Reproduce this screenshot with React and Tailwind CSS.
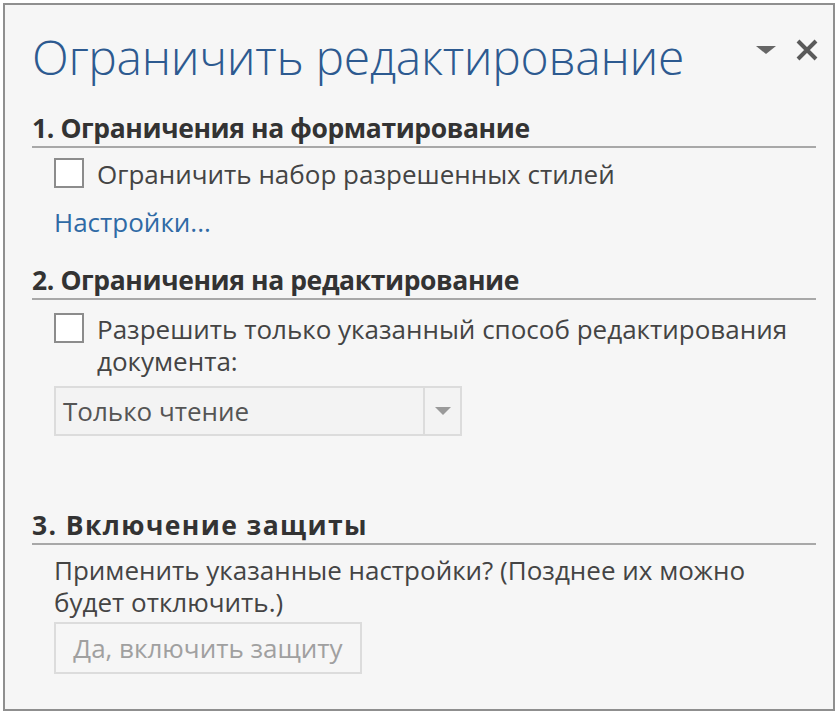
import React from 'react'

const font = { fontFamily: '"Open Sans", "Noto Sans", sans-serif' }

function Checkbox() {
  return <span className="h-[30px] w-[30px] shrink-0 border-2 border-[#8c8c8c] bg-white" />
}

function SectionHeading({ children, className = '' }) {
  return (
    <div
      className={`mr-[17px] border-b-2 border-[#a8a8a8] pb-[2px] text-[26.5px] font-bold leading-[32px] tracking-[-0.4px] text-[#333] ${className}`}
    >
      {children}
    </div>
  )
}

export default function App() {
  return (
    <div className="h-[714px] w-[838px] bg-white p-[3px]" style={font}>
      <div className="flex h-full flex-col border-2 border-[#8f8f8f] bg-[#f6f6f6] pl-[27px]">
        <div className="flex items-start justify-between pr-[14px] pt-[22px]">
          <h1 className="text-[48px] font-light leading-[60px] tracking-[-0.3px] text-[#2d5a90]">
            Ограничить редактирование
          </h1>
          <div className="mt-[11px] flex items-center gap-[18px]">
            <svg width="22" height="10" viewBox="0 0 22 10">
              <path d="M1 1 L21 1 L11 9 Z" fill="#666" />
            </svg>
            <svg width="24" height="24" viewBox="0 0 24 24">
              <path d="M3 3 L21 21 M21 3 L3 21" stroke="#5a5a5a" strokeWidth="4" />
            </svg>
          </div>
        </div>

        <div className="mt-[25px]">
          <SectionHeading>1. Ограничения на форматирование</SectionHeading>
        </div>
        <div className="mt-[10px] flex gap-[13px] pl-[22px]">
          <Checkbox />
          <span className="text-[26px] leading-[32px] text-[#444]">
            Ограничить набор разрешенных стилей
          </span>
        </div>
        <div className="mt-[16px] pl-[22px] text-[26px] leading-[32px] text-[#2f6aa5]">
          Настройки...
        </div>

        <div className="mt-[26px]">
          <SectionHeading>2. Ограничения на редактирование</SectionHeading>
        </div>
        <div className="mt-[13px] flex gap-[13px] pl-[22px] pr-[30px]">
          <Checkbox />
          <span className="text-[26px] leading-[32px] text-[#444]">
            Разрешить только указанный способ редактирования документа:
          </span>
        </div>
        <div className="ml-[22px] mt-[9px] flex h-[50px] w-[408px] border-2 border-[#dcdcdc] bg-[#f3f3f3]">
          <span className="flex-1 pl-[7px] text-[26px] leading-[46px] text-[#555]">Только чтение</span>
          <span className="flex w-[37px] items-center justify-center border-l-2 border-[#dcdcdc]">
            <svg width="16" height="8" viewBox="0 0 16 8">
              <path d="M0 0 L16 0 L8 8 Z" fill="#9a9a9a" />
            </svg>
          </span>
        </div>

        <div className="mt-[73px]">
          <SectionHeading className="tracking-[1.4px]">3. Включение защиты</SectionHeading>
        </div>
        <div className="mt-[9px] pl-[22px] pr-[50px] text-[26px] leading-[32px] text-[#444]">
          Применить указанные настройки? (Позднее их можно будет отключить.)
        </div>
        <div className="ml-[22px] mt-[4px] flex h-[52px] w-[308px] items-center justify-center border-2 border-[#dcdcdc] bg-[#f6f6f6] text-[26px] text-[#a0a0a0]">
          Да, включить защиту
        </div>
      </div>
    </div>
  )
}
